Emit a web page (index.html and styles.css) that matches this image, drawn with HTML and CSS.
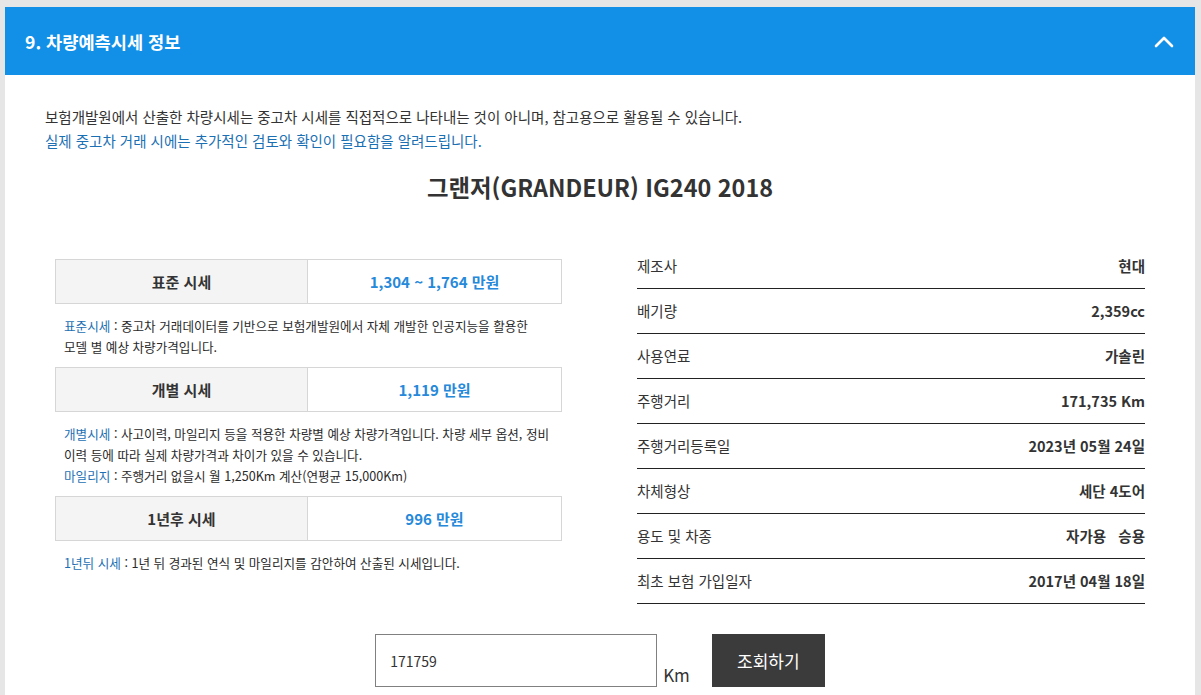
FILE: index.html
```html
<!DOCTYPE html>
<html lang="ko">
<head>
  <meta charset="UTF-8">
  <meta name="viewport" content="width=device-width, initial-scale=1.0">
  <title>차량예측시세 정보</title>
  <link rel="stylesheet" href="styles.css">
</head>
<body>
  <div class="panel">
    <div class="panel-head">
      <h2>9. 차량예측시세 정보</h2>
      <svg class="toggle" width="20" height="12" viewBox="0 0 20 12">
        <polyline points="2,10 10,2 18,10" fill="none" stroke="#fff" stroke-width="2.6" stroke-linecap="round" stroke-linejoin="round"/>
      </svg>
    </div>

    <div class="panel-body">
      <p class="intro">보험개발원에서 산출한 차량시세는 중고차 시세를 직접적으로 나타내는 것이 아니며, 참고용으로 활용될 수 있습니다.<br>
        <span class="blue">실제 중고차 거래 시에는 추가적인 검토와 확인이 필요함을 알려드립니다.</span></p>

      <h3 class="car-name">그랜저(GRANDEUR) IG240 2018</h3>

      <div class="result">
        <div class="prices">
          <div class="price-row">
            <div class="label">표준 시세</div>
            <div class="value">1,304 ~ 1,764 만원</div>
          </div>
          <p class="note"><em>표준시세</em> : 중고차 거래데이터를 기반으로 보험개발원에서 자체 개발한 인공지능을 활용한<br>모델 별 예상 차량가격입니다.</p>

          <div class="price-row">
            <div class="label">개별 시세</div>
            <div class="value">1,119 만원</div>
          </div>
          <p class="note"><em>개별시세</em> : 사고이력, 마일리지 등을 적용한 차량별 예상 차량가격입니다. 차량 세부 옵션, 정비<br>이력 등에 따라 실제 차량가격과 차이가 있을 수 있습니다.<br>
            <em>마일리지</em> : 주행거리 없을시 월 1,250Km 계산(연평균 15,000Km)</p>

          <div class="price-row">
            <div class="label">1년후 시세</div>
            <div class="value">996 만원</div>
          </div>
          <p class="note"><em>1년뒤 시세</em> : 1년 뒤 경과된 연식 및 마일리지를 감안하여 산출된 시세입니다.</p>
        </div>

        <ul class="specs">
          <li><span>제조사</span><b>현대</b></li>
          <li><span>배기량</span><b>2,359cc</b></li>
          <li><span>사용연료</span><b>가솔린</b></li>
          <li><span>주행거리</span><b>171,735 Km</b></li>
          <li><span>주행거리등록일</span><b>2023년 05월 24일</b></li>
          <li><span>차체형상</span><b>세단 4도어</b></li>
          <li><span>용도 및 차종</span><b>자가용&nbsp;&nbsp;&nbsp;승용</b></li>
          <li><span>최초 보험 가입일자</span><b>2017년 04월 18일</b></li>
        </ul>
      </div>

      <div class="search">
        <input type="text" class="km-input" value="171759">
        <span class="unit">Km</span>
        <button type="button" class="btn-search">조회하기</button>
      </div>
    </div>
  </div>
</body>
</html>
```

FILE: styles.css
```css
body {
  margin: 0;
  padding: 7px 6px 0 5px;
  background: #e6e6e6;
  font-family: "Noto Sans CJK KR", "Noto Sans", sans-serif;
  color: #333;
}

.panel {
  background: #fff;
  height: 688px;
  overflow: hidden;
}

.panel-head {
  height: 68px;
  background: #128fe7;
  display: flex;
  align-items: center;
  justify-content: space-between;
  padding: 0 21px 0 20px;
}
.panel-head h2 {
  margin: 0;
  color: #fff;
  font-size: 17.6px;
  font-weight: bold;
}
.toggle {
  display: block;
  margin-top: 2px;
}

.panel-body {
  padding: 30px 40px 0;
}

.intro {
  margin: 0;
  font-size: 14.5px;
  line-height: 24px;
}
.blue {
  color: #1b70b3;
}

.car-name {
  margin: 18px 0 0;
  text-align: center;
  font-size: 23.4px;
  line-height: 32px;
  font-weight: bold;
}

.result {
  display: grid;
  grid-template-columns: 507px 508px;
  justify-content: space-between;
  margin: 41px 10px 0 10px;
}

.prices {
  padding-top: 15px;
}
.price-row {
  display: grid;
  grid-template-columns: 252px 1fr;
  height: 45px;
  box-sizing: border-box;
  border: 1px solid #d6d6d6;
  font-size: 15px;
  font-weight: bold;
}
.price-row .label {
  background: #f4f4f4;
  border-right: 1px solid #d6d6d6;
  display: flex;
  align-items: center;
  justify-content: center;
}
.price-row .value {
  color: #2689da;
  display: flex;
  align-items: center;
  justify-content: center;
}
.note {
  margin: 0;
  padding: 11px 0 10px 9px;
  font-size: 12.6px;
  line-height: 21px;
  color: #2a2a2a;
}
.note em {
  font-style: normal;
  color: #1d6fb3;
}

.specs {
  list-style: none;
  margin: 0;
  padding: 0;
}
.specs li {
  height: 45px;
  box-sizing: border-box;
  border-bottom: 1px solid #222;
  display: flex;
  align-items: center;
  justify-content: space-between;
  font-size: 14.5px;
  padding-bottom: 1px;
}
.specs b {
  font-weight: bold;
}

.search {
  display: flex;
  align-items: flex-end;
  justify-content: center;
  margin-top: 30px;
}
.km-input {
  width: 282px;
  height: 53px;
  box-sizing: border-box;
  border: 1px solid #808080;
  padding: 0 14px;
  font-family: inherit;
  font-size: 14px;
  color: #333;
  outline: none;
}
.unit {
  font-size: 17px;
  margin: 0 22px 0 6px;
  line-height: 24px;
}
.btn-search {
  width: 113px;
  height: 53px;
  border: 0;
  background: #3b3b3b;
  color: #fff;
  font-family: inherit;
  font-size: 17px;
}
```
